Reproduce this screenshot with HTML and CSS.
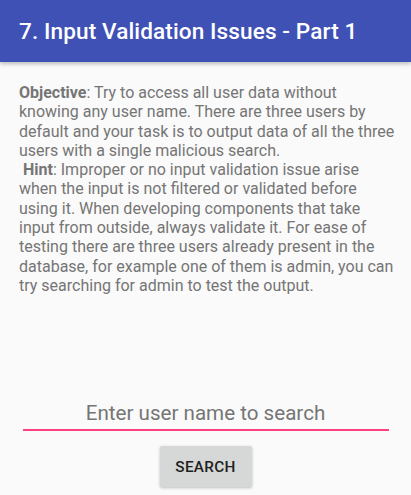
FILE: index.html
```html
<!DOCTYPE html>
<html lang="en">
	<head>
		<meta charset="utf-8" />
		<title>Input Validation Issues - Part 1</title>
		<meta name="viewport" content="width=device-width, initial-scale=1.0" />
		<link rel="stylesheet" href="styles.css">
	</head>
	<body>
		<div class="toolbar">
			<h1>7. Input Validation Issues - Part 1</h1>
		</div>

		<div class="content">
			<p class="desc"><b>Objective</b>: Try to access all user data without knowing any user name. There are three users by default and your task is to output data of all the three users with a single malicious search.<br><span class="indent"><b>Hint</b></span>: Improper or no input validation issue arise when the input is not filtered or validated before using it. When developing components that take input from outside, always validate it. For ease of testing there are three users already present in the database, for example one of them is admin, you can try searching for admin to test the output.</p>

			<div class="search">
				<input type="text" class="field" placeholder="Enter user name to search">
				<button class="btn">SEARCH</button>
			</div>
		</div>
	</body>
</html>
```

FILE: styles.css
```css
html, body { margin: 0; padding: 0; }
body { background: #fafafa; font-family: Roboto, "Noto Sans", sans-serif; width: 411px; height: 495px; overflow: hidden; }

.toolbar { height: 62px; background: #3f51b5; display: flex; align-items: center; padding: 0 19px; box-shadow: 0 2px 4px rgba(0,0,0,0.25); position: relative; }
.toolbar h1 { margin: 0; color: #fff; font-size: 22.6px; font-weight: 500; letter-spacing: 0.1px; }

.content { display: flex; flex-direction: column; height: 433px; padding: 0 14px 0 19px; }
.desc { margin: 21px 0 0; color: #757575; font-size: 16px; line-height: 19.3px; }
.desc b { font-weight: 700; }
.indent { padding-left: 4px; }

.search { margin-top: auto; display: flex; flex-direction: column; align-items: center; padding: 0 0 8px; margin-left: -19px; margin-right: -14px; }
.field { width: 366px; box-sizing: border-box; border: none; border-bottom: 2px solid #ff4081; background: transparent; font-family: Roboto, sans-serif; font-size: 20.6px; text-align: center; padding: 0 0 4px; outline: none; color: #333; }
.field::placeholder { color: #757575; }
.btn { margin-top: 15px; width: 92px; height: 41px; border: none; border-radius: 2px; background: #d6d7d7; box-shadow: 0 1px 3px rgba(0,0,0,0.25); font-family: Roboto, sans-serif; font-size: 15.3px; font-weight: 500; color: #212121; letter-spacing: 0.3px; }
```
